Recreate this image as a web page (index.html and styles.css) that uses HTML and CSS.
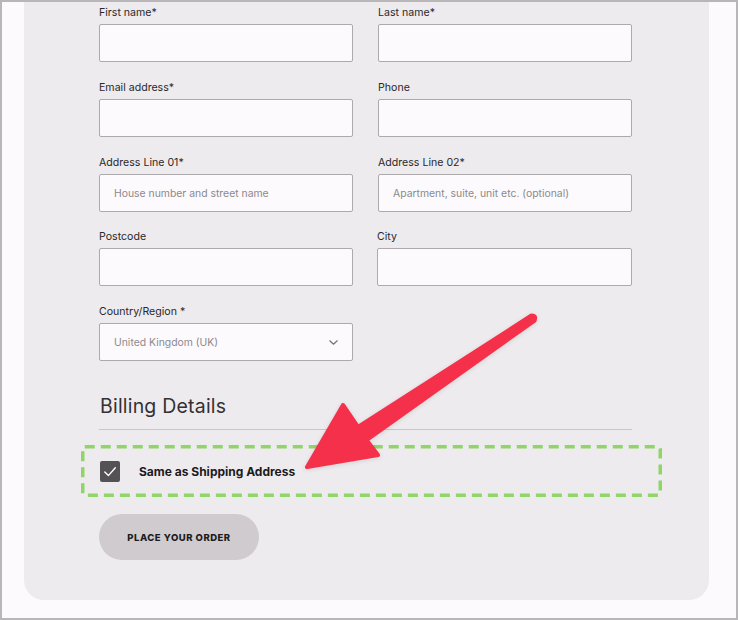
FILE: index.html
```html
<!DOCTYPE html>
<html>
<head>
<meta charset="utf-8">
<link rel="stylesheet" href="styles.css">
</head>
<body>
<div class="frame">
  <div class="card">
    <form class="grid">
      <div class="field">
        <label>First name*</label>
        <div class="input"></div>
      </div>
      <div class="field">
        <label>Last name*</label>
        <div class="input"></div>
      </div>
      <div class="field">
        <label>Email address*</label>
        <div class="input"></div>
      </div>
      <div class="field">
        <label>Phone</label>
        <div class="input"></div>
      </div>
      <div class="field">
        <label>Address Line 01*</label>
        <div class="input"><span class="ph">House number and street name</span></div>
      </div>
      <div class="field">
        <label>Address Line 02*</label>
        <div class="input"><span class="ph">Apartment, suite, unit etc. (optional)</span></div>
      </div>
      <div class="field lift">
        <label>Postcode</label>
        <div class="input"></div>
      </div>
      <div class="field lift city">
        <label>City</label>
        <div class="input"></div>
      </div>
      <div class="field">
        <label>Country/Region *</label>
        <div class="input select">
          <span class="ph">United Kingdom (UK)</span>
          <svg class="chev" width="9" height="5" viewBox="0 0 9 5"><path d="M0.8 0.8 L4.5 4.2 L8.2 0.8" fill="none" stroke="#757275" stroke-width="1.2" stroke-linecap="round" stroke-linejoin="round"/></svg>
        </div>
      </div>
    </form>

    <h2 class="billing">Billing Details</h2>
    <div class="rule"></div>

    <div class="highlight">
      <svg class="dash" width="581" height="52" viewBox="0 0 581 52"><rect x="1.75" y="1.75" width="577.5" height="48.5" rx="2" fill="none" stroke="#8fd567" stroke-width="3.5" stroke-dasharray="10 6"/></svg>
      <span class="check">
        <svg width="20" height="21" viewBox="0 0 20 21"><path d="M4.8 11 L8.4 14.6 L15.3 6.8" fill="none" stroke="#ffffff" stroke-width="1.4" stroke-linecap="round" stroke-linejoin="round"/></svg>
      </span>
      <span class="same">Same as Shipping Address</span>
    </div>

    <button class="order" type="button">PLACE YOUR ORDER</button>
  </div>

  <svg class="arrow" width="738" height="620" viewBox="0 0 738 620">
    <path d="M531.4 315.5 L358 427 L343 405 L307 467 L378 455 L366.5 440 L534.6 320.5 Z" fill="#f5304a" stroke="#f5304a" stroke-width="4" stroke-linejoin="round"/>
    <circle cx="533" cy="318" r="4.2" fill="#f5304a"/>
  </svg>
</div>
</body>
</html>
```

FILE: styles.css
```css
* { box-sizing: border-box; }
html, body { margin: 0; padding: 0; }
body {
  width: 738px;
  height: 620px;
  overflow: hidden;
  font-family: Inter, "Liberation Sans", sans-serif;
  color: #262426;
}
.frame {
  position: relative;
  width: 738px;
  height: 620px;
  border: 2px solid #b9b6b9;
  background: #fdfafd;
  padding: 0 27px 18px 22px;
  display: flex;
  flex-direction: column;
}
.card {
  flex: 1;
  background: #eeebee;
  border-radius: 0 0 20px 20px;
  padding: 4px 77px 40px 75px;
  display: flex;
  flex-direction: column;
  align-items: flex-start;
}
.grid {
  display: grid;
  grid-template-columns: 254px 254px;
  column-gap: 25px;
  row-gap: 19px;
  margin: 0;
}
.field {
  display: flex;
  flex-direction: column;
  gap: 4px;
}
.lift { margin-top: -1px; }
.field label {
  font-size: 10.6px;
  line-height: 14px;
  color: #2a282a;
}
.city { margin-left: -1px; }
.input {
  height: 38px;
  background: #fdfafd;
  border: 1px solid #adaaad;
  border-radius: 2px;
  display: flex;
  align-items: center;
  padding: 0 14px;
}
.ph {
  font-size: 10.4px;
  color: #8c898c;
}
.select { justify-content: space-between; padding-right: 14px; }
.chev { display: block; }
.billing {
  margin: 34px 0 0 1px;
  font-size: 19.5px;
  line-height: 22px;
  font-weight: 400;
  color: #333133;
  letter-spacing: 0.2px;
}
.rule {
  align-self: stretch;
  margin-top: 12px;
  height: 1px;
  background: #c9c6c9;
}
.highlight {
  position: relative;
  margin: 15px 0 0 -18px;
  width: 581px;
  height: 52px;
  display: flex;
  align-items: center;
  padding-left: 19px;
}
.dash { position: absolute; left: 0; top: 0; }
.check {
  width: 20px;
  height: 21px;
  background: #555255;
  border-radius: 2px;
  display: flex;
}
.same {
  margin-left: 19px;
  font-size: 12px;
  font-weight: 700;
  color: #1c1a1c;
}
.order {
  margin-top: 17px;
  width: 160px;
  height: 46px;
  border: none;
  border-radius: 23px;
  background: #cfcbcf;
  font-family: Inter, "Liberation Sans", sans-serif;
  font-size: 9.5px;
  font-weight: 800;
  letter-spacing: 0.5px;
  color: #1e1c1e;
  padding: 0;
}
.arrow {
  position: absolute;
  left: -2px;
  top: -2px;
  pointer-events: none;
  filter: drop-shadow(0 1px 2px rgba(0,0,0,0.12));
}
```
